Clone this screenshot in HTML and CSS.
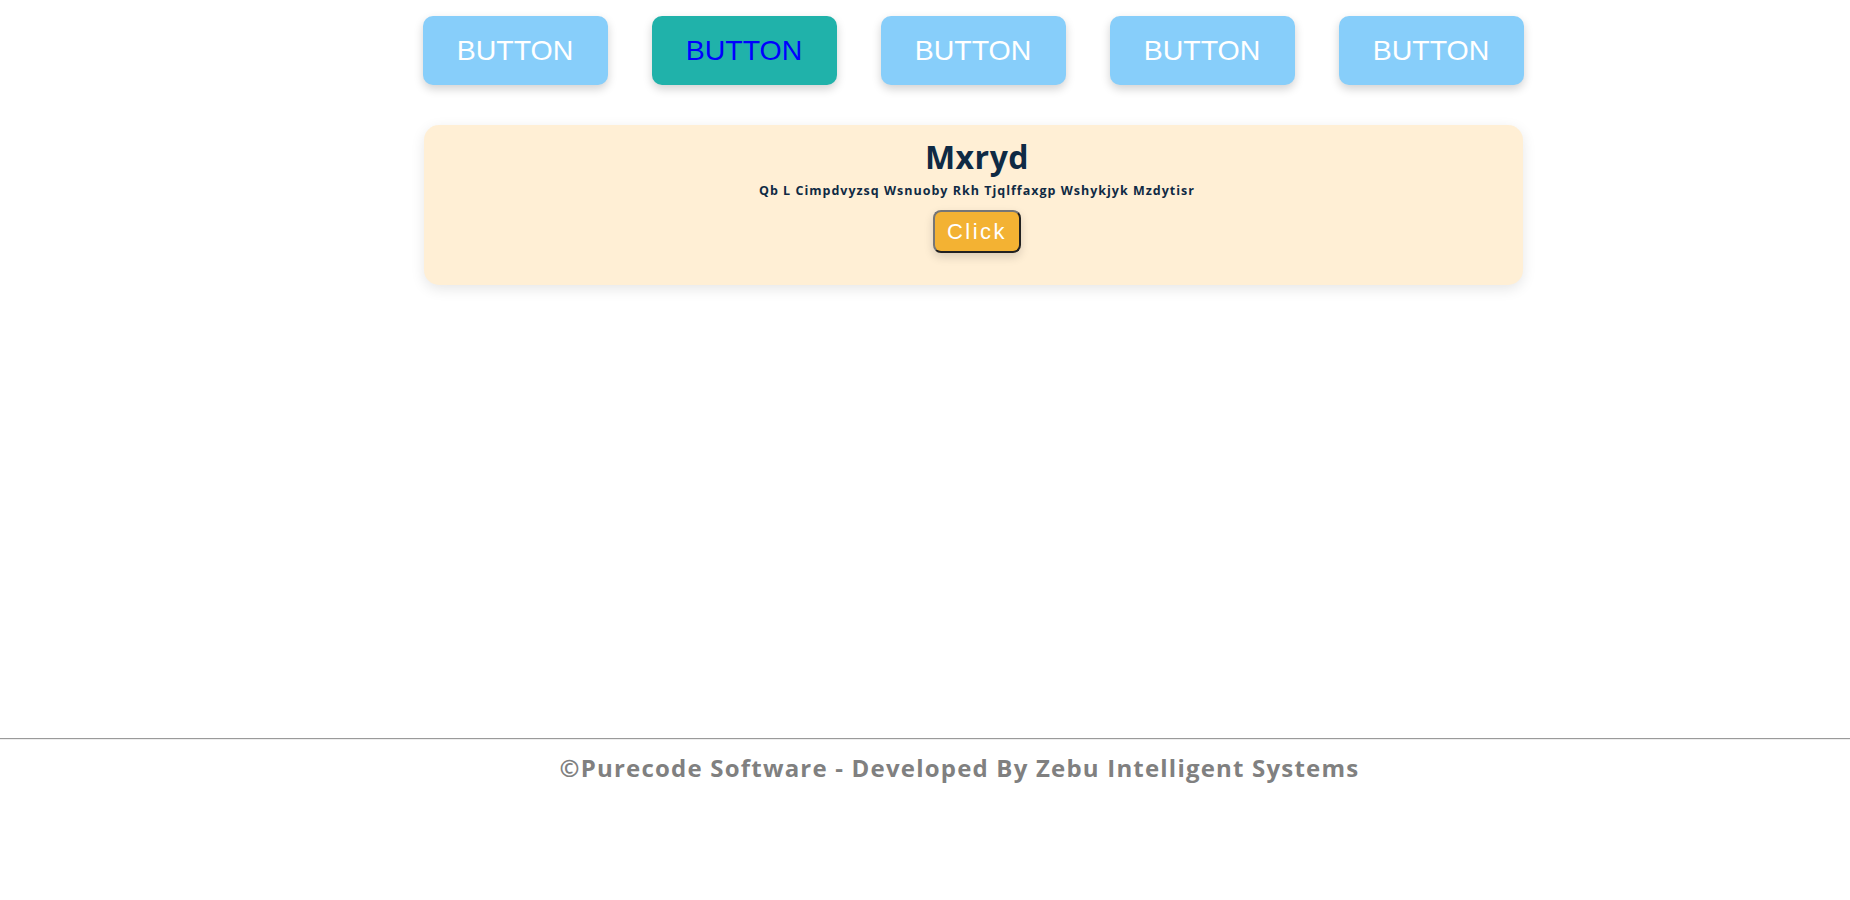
FILE: index.html
```html
<!DOCTYPE html>
<html lang="en">
<head>
<meta charset="utf-8">
<title>Purecode</title>
<link rel="stylesheet" href="styles.css">
</head>
<body>
<main class="main">
  <nav class="tabs">
    <button class="tab">BUTTON</button>
    <button class="tab tab-active">BUTTON</button>
    <button class="tab">BUTTON</button>
    <button class="tab">BUTTON</button>
    <button class="tab">BUTTON</button>
  </nav>
  <section class="card">
    <h2 class="card-title">Mxryd</h2>
    <p class="card-sub">Qb L Cimpdvyzsq Wsnuoby Rkh Tjqlffaxgp Wshykjyk Mzdytisr</p>
    <button class="click-btn">Click</button>
  </section>
</main>
<footer class="footer">
  <hr class="footer-rule">
  <p class="footer-text">©Purecode Software - Developed By Zebu Intelligent Systems</p>
</footer>
</body>
</html>
```
FILE: styles.css
```css
html, body {
  margin: 0;
  padding: 0;
  background: #ffffff;
}
body {
  font-family: "Open Sans", "Noto Sans", sans-serif;
}
.main {
  box-sizing: border-box;
  height: 738px;
  padding: 16px 0 0 96px;
}
.tabs {
  display: flex;
  justify-content: center;
  gap: 44px;
}
.tab {
  width: 185px;
  height: 69px;
  border: none;
  border-radius: 10px;
  background: #87cefa;
  color: #ffffff;
  font-family: "Liberation Sans", Arial, sans-serif;
  font-size: 28.5px;
  box-shadow: 0 4px 10px rgba(0, 0, 0, 0.18);
  padding: 0;
  cursor: pointer;
}
.tab-active {
  background: #20b2aa;
  color: #0000ff;
}
.card {
  box-sizing: border-box;
  width: 1099px;
  height: 160px;
  margin: 40px auto 0;
  background: #ffefd5;
  border-radius: 15px;
  box-shadow: 0 4px 14px rgba(0, 0, 0, 0.1);
  text-align: center;
  padding: 12px 0 0 8px;
  color: #0f2a44;
}
.card-title {
  margin: 0;
  font-size: 32px;
  font-weight: 700;
  letter-spacing: 0.5px;
  line-height: 40px;
}
.card-sub {
  margin: 5px 0 0;
  font-size: 12.5px;
  font-weight: 700;
  letter-spacing: 1px;
  line-height: 17px;
}
.click-btn {
  margin-top: 11px;
  width: 88px;
  height: 43px;
  padding: 0;
  background: #f3b233;
  border: 2px outset #767676;
  border-radius: 8px;
  color: #ffffff;
  font-family: "Liberation Sans", Arial, sans-serif;
  font-size: 22px;
  letter-spacing: 2.5px;
  box-shadow: 0 4px 10px rgba(0, 0, 0, 0.15);
  cursor: pointer;
}
.footer {
  text-align: center;
}
.footer-rule {
  margin: 0;
  border: none;
  border-top: 1px solid #9a9a9a;
  border-bottom: 1px solid #eeeeee;
}
.footer-text {
  margin: 11px 0 0;
  padding-left: 69px;
  font-size: 24px;
  font-weight: 700;
  letter-spacing: 1.2px;
  color: #808080;
}
```
